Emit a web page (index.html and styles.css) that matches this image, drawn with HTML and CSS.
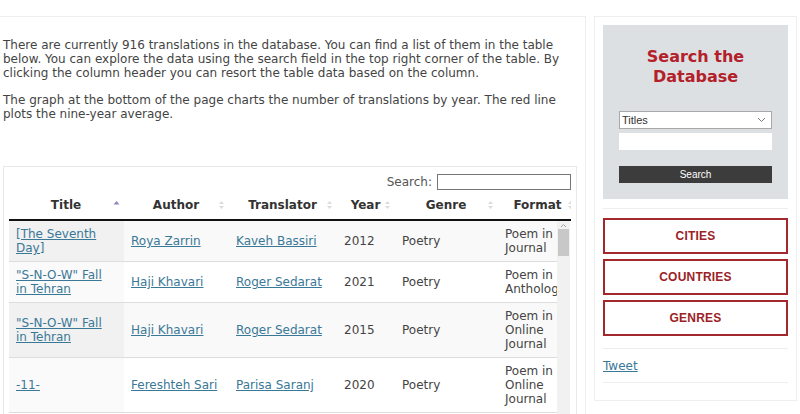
FILE: index.html
```html
<!DOCTYPE html>
<html lang="en">
<head>
<meta charset="utf-8">
<title>Translations Database</title>
<link rel="stylesheet" href="styles.css">
</head>
<body>
<div class="page">
  <main class="main">
    <div class="intro">
      <p>There are currently 916 translations in the database. You can find a list of them in the table below. You can explore the data using the search field in the top right corner of the table. By clicking the column header you can resort the table data based on the column.</p>
      <p>The graph at the bottom of the page charts the number of translations by year. The red line plots the nine-year average.</p>
    </div>
    <div class="dt">
      <div class="dt-search"><label class="dt-label">Search:<input class="dt-input" type="search"></label></div>
      <div class="dt-head">
        <table class="tbl">
          <colgroup><col class="c1"><col class="c2"><col class="c3"><col class="c4"><col class="c5"><col class="c6"></colgroup>
          <thead>
            <tr>
              <th><div class="thc"><span class="lbl">Title</span><svg class="sort" width="7" height="12" viewBox="0 0 7 12"><path d="M0.5 5.5 L3.5 2 L6.5 5.5Z" fill="#8a86c6"/></svg></div></th>
              <th><div class="thc"><span class="lbl">Author</span><svg class="sort" width="7" height="12" viewBox="0 0 7 12"><path d="M1 5 L3.5 2 L6 5Z M1 7 L3.5 10 L6 7Z" fill="#dcdcdc"/></svg></div></th>
              <th><div class="thc"><span class="lbl">Translator</span><svg class="sort" width="7" height="12" viewBox="0 0 7 12"><path d="M1 5 L3.5 2 L6 5Z M1 7 L3.5 10 L6 7Z" fill="#dcdcdc"/></svg></div></th>
              <th><div class="thc"><span class="lbl">Year</span><svg class="sort" width="7" height="12" viewBox="0 0 7 12"><path d="M1 5 L3.5 2 L6 5Z M1 7 L3.5 10 L6 7Z" fill="#dcdcdc"/></svg></div></th>
              <th><div class="thc"><span class="lbl">Genre</span><svg class="sort" width="7" height="12" viewBox="0 0 7 12"><path d="M1 5 L3.5 2 L6 5Z M1 7 L3.5 10 L6 7Z" fill="#dcdcdc"/></svg></div></th>
              <th><div class="thc"><span class="lbl">Format</span><svg class="sort" width="7" height="12" viewBox="0 0 7 12"><path d="M1 5 L3.5 2 L6 5Z M1 7 L3.5 10 L6 7Z" fill="#dcdcdc"/></svg></div></th>
            </tr>
          </thead>
        </table>
      </div>
      <div class="dt-bodywrap">
        <div class="dt-body">
          <table class="tbl">
            <colgroup><col class="c1"><col class="c2"><col class="c3"><col class="c4"><col class="c5"><col class="c6"></colgroup>
            <tbody>
              <tr class="odd">
                <td class="sorted"><a href="#">[The Seventh Day]</a></td>
                <td><a href="#">Roya Zarrin</a></td>
                <td><a href="#">Kaveh Bassiri</a></td>
                <td>2012</td>
                <td>Poetry</td>
                <td>Poem in Journal</td>
              </tr>
              <tr class="even">
                <td class="sorted"><a href="#">"S-N-O-W" Fall in Tehran</a></td>
                <td><a href="#">Haji Khavari</a></td>
                <td><a href="#">Roger Sedarat</a></td>
                <td>2021</td>
                <td>Poetry</td>
                <td>Poem in Anthology</td>
              </tr>
              <tr class="odd">
                <td class="sorted"><a href="#">"S-N-O-W" Fall in Tehran</a></td>
                <td><a href="#">Haji Khavari</a></td>
                <td><a href="#">Roger Sedarat</a></td>
                <td>2015</td>
                <td>Poetry</td>
                <td>Poem in Online Journal</td>
              </tr>
              <tr class="even">
                <td class="sorted"><a href="#">-11-</a></td>
                <td><a href="#">Fereshteh Sari</a></td>
                <td><a href="#">Parisa Saranj</a></td>
                <td>2020</td>
                <td>Poetry</td>
                <td>Poem in Online Journal</td>
              </tr>
            </tbody>
          </table>
        </div>
        <div class="scrollbar">
          <svg class="sb-up" width="13" height="8" viewBox="0 0 13 8"><path d="M4 6 L6.5 3.5 L9 6" fill="none" stroke="#a3a3a3" stroke-width="1"/></svg>
          <div class="sb-thumb"></div>
        </div>
      </div>
    </div>
  </main>
  <aside class="side">
    <div class="searchbox">
      <h2 class="sb-title">Search the Database</h2>
      <div class="selwrap">
        <select class="sel"><option>Titles</option></select>
        <svg class="chev" width="9" height="6" viewBox="0 0 9 6"><path d="M1 1 L4.5 4.5 L8 1" fill="none" stroke="#777" stroke-width="1"/></svg>
      </div>
      <input class="qinput" type="text">
      <button class="sbtn" type="button">Search</button>
    </div>
    <hr class="rule rule-top">
    <nav class="navbtns">
      <a class="navbtn" href="#">CITIES</a>
      <a class="navbtn" href="#">COUNTRIES</a>
      <a class="navbtn" href="#">GENRES</a>
    </nav>
    <hr class="rule rule-mid">
    <a class="tweet" href="#">Tweet</a>
    <hr class="rule rule-bot">
  </aside>
</div>
</body>
</html>
```
FILE: styles.css
```css
html, body {
  margin: 0;
  padding: 0;
  overflow: hidden;
  background: #fff;
}
body {
  font-family: "DejaVu Sans", Verdana, sans-serif;
  font-size: 12px;
  line-height: 14px;
  color: #444;
}
.page {
  display: flex;
  align-items: flex-start;
  gap: 8px;
  padding-top: 16px;
  height: 414px;
  box-sizing: border-box;
  overflow: hidden;
}
.main {
  width: 585px;
  height: 420px;
  flex: none;
  border-top: 1px solid #eeeeee;
  border-right: 1px solid #eeeeee;
}
.intro {
  padding: 21px 0 0 3px;
}
.intro p {
  margin: 0;
}
.intro p + p {
  margin-top: 13px;
}
.dt {
  margin: 45px 8px 0 3px;
  border: 1px solid #e8e8e8;
  padding: 7px 5px 0 5px;
  height: 400px;
}
.dt-search {
  display: flex;
  justify-content: flex-end;
  height: 16px;
}
.dt-label {
  display: flex;
  align-items: center;
  gap: 5px;
  color: #555;
}
.dt-input {
  width: 134px;
  height: 16px;
  box-sizing: border-box;
  border: 1px solid #767676;
  margin: 0;
  padding: 0 2px;
  font: inherit;
}
.dt-head {
  overflow: hidden;
}
.tbl {
  table-layout: fixed;
  border-collapse: collapse;
  width: 569px;
}
.c1 { width: 115px; }
.c2 { width: 105px; }
.c3 { width: 108px; }
.c4 { width: 58px; }
.c5 { width: 103px; }
.c6 { width: 80px; }
.tbl th {
  padding: 8px 4px 7px 10px;
  border-bottom: 2px solid #111;
  font-weight: bold;
  color: #333;
  white-space: nowrap;
}
.thc {
  display: flex;
  align-items: center;
}
.lbl {
  flex: 1;
  text-align: center;
}
.sort {
  flex: none;
}
.dt-bodywrap {
  display: flex;
}
.dt-body {
  width: 548px;
  overflow: hidden;
  flex: none;
}
.tbl td {
  padding: 6px 10px 6px 7px;
  border-top: 1px solid #dddddd;
  vertical-align: middle;
  color: #444;
}
.tbl tbody tr:first-child td {
  border-top: none;
}
.tbl tbody tr:last-child td {
  border-bottom: 1px solid #dddddd;
}
.odd td { background: #f9f9f9; }
.odd td.sorted { background: #f1f1f1; }
.even td { background: #ffffff; }
.even td.sorted { background: #fafafa; }
.tbl a {
  color: #3a7897;
  text-decoration: underline;
}
.scrollbar {
  width: 13px;
  flex: none;
  background: #f1f1f1;
  display: flex;
  flex-direction: column;
  align-items: center;
  height: 200px;
}
.sb-up {
  display: block;
}
.sb-thumb {
  width: 11px;
  height: 27px;
  background: #c8c8c8;
}
.side {
  width: 203px;
  height: 385px;
  flex: none;
  box-sizing: border-box;
  border: 1px solid #eeeeee;
  padding: 8px 8px 0;
  display: flex;
  flex-direction: column;
}
.searchbox {
  background: #dde0e3;
  padding: 22px 16px 16px;
  display: flex;
  flex-direction: column;
}
.sb-title {
  margin: 0;
  font-family: "DejaVu Sans", Verdana, sans-serif;
  font-size: 16px;
  line-height: 20px;
  font-weight: bold;
  color: #b3202a;
  text-align: center;
}
.selwrap {
  position: relative;
  margin-top: 24px;
}
.sel {
  display: block;
  width: 100%;
  height: 18px;
  box-sizing: border-box;
  appearance: none;
  -webkit-appearance: none;
  border: 1px solid #a9a9a9;
  border-radius: 0;
  background: #fff;
  margin: 0;
  padding: 0 2px;
  font-family: "Liberation Sans", Arial, sans-serif;
  font-size: 11px;
  color: #333;
}
.chev {
  position: absolute;
  right: 6px;
  top: 6px;
}
.qinput {
  margin: 4px 0 0;
  height: 17px;
  box-sizing: border-box;
  border: none;
  background: #fff;
  padding: 0 2px;
}
.sbtn {
  margin-top: 16px;
  height: 17px;
  border: none;
  background: #3c3c3c;
  color: #fff;
  font-family: "Liberation Sans", Arial, sans-serif;
  font-size: 10px;
  padding: 0;
}
.rule {
  border: none;
  border-top: 1px solid #eeeeee;
  margin: 0;
}
.rule-top { margin-top: 9px; }
.navbtns {
  margin-top: 9px;
  display: flex;
  flex-direction: column;
  gap: 5px;
}
.navbtn {
  display: flex;
  align-items: center;
  justify-content: center;
  height: 36px;
  box-sizing: border-box;
  border: 2px solid #a3282b;
  color: #9b2226;
  font-family: "Liberation Sans", Arial, sans-serif;
  font-size: 12px;
  font-weight: bold;
  text-decoration: none;
  letter-spacing: 0.2px;
}
.rule-mid { margin-top: 12px; }
.tweet {
  margin-top: 10px;
  color: #3a7897;
  text-decoration: underline;
  align-self: flex-start;
}
.rule-bot { margin-top: 9px; }
```
